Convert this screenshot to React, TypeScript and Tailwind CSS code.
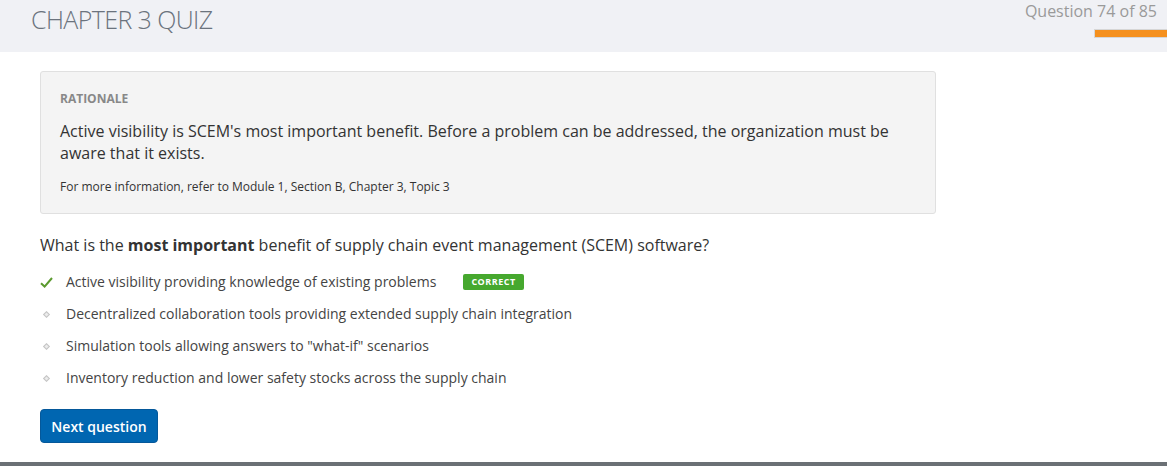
import React from 'react'

const options = [
  { text: 'Active visibility providing knowledge of existing problems', correct: true },
  { text: 'Decentralized collaboration tools providing extended supply chain integration', correct: false },
  { text: 'Simulation tools allowing answers to "what-if" scenarios', correct: false },
  { text: 'Inventory reduction and lower safety stocks across the supply chain', correct: false },
]

function CheckMark() {
  return (
    <svg width="13" height="11" viewBox="0 0 13 11" className="shrink-0">
      <path d="M1 6.2 L4.6 9.6 L12 1" fill="none" stroke="#5b9a2f" strokeWidth="2" strokeLinejoin="miter" />
    </svg>
  )
}

function Bullet() {
  return (
    <span className="flex w-[13px] shrink-0 justify-center">
      <span className="block h-[5px] w-[5px] rotate-45 border border-[#c4c4c4] bg-[#ececec]" />
    </span>
  )
}

export default function App() {
  return (
    <div className="flex h-[466px] w-full flex-col bg-white font-['Open_Sans',sans-serif] text-[#333]">
      <header className="flex h-[52px] shrink-0 items-start justify-between bg-[#f0f1f5]">
        <h1 className="ml-[31px] mt-[3px] text-[25px] font-light leading-[32px] tracking-[-0.6px] text-[#6b737d]">
          CHAPTER 3 QUIZ
        </h1>
        <div className="flex flex-col items-end">
          <span className="mr-[10px] mt-0 text-[16px] leading-[22px] text-[#9a9a9a]">Question 74 of 85</span>
          <span className="mt-[7px] block h-[9px] w-[73px] border border-[#d6d6d6] border-r-0 bg-[#f5901e]" />
        </div>
      </header>

      <main className="flex-1 px-[40px] pt-[19px]">
        <section className="w-[896px] rounded-[3px] border border-[#e0e0e0] bg-[#f4f4f4] px-[19px] pb-[18px] pt-[17px]">
          <h2 className="text-[12px] font-bold leading-[20px] text-[#888]">RATIONALE</h2>
          <p className="mt-[11px] text-[16px] leading-[22px] text-[#333]">
            Active visibility is SCEM&apos;s most important benefit. Before a problem can be addressed, the organization must be
            aware that it exists.
          </p>
          <p className="mt-[14px] text-[12px] leading-[17px] text-[#333]">
            For more information, refer to Module 1, Section B, Chapter 3, Topic 3
          </p>
        </section>

        <p className="mt-[20px] text-[16px] leading-[22px] text-[#333]">
          What is the <strong className="font-bold">most important</strong> benefit of supply chain event management (SCEM) software?
        </p>

        <ul className="mt-[16px] flex flex-col gap-[12px]">
          {options.map((o) => (
            <li key={o.text} className="flex h-[20px] items-center gap-[13px] text-[14px] leading-[20px] text-[#444]">
              {o.correct ? <CheckMark /> : <Bullet />}
              <span>{o.text}</span>
              {o.correct && (
                <span className="ml-[14px] flex h-[16px] items-center rounded-[2px] bg-[#46a82e] px-[8px] text-[9px] font-bold tracking-[0.5px] text-white">
                  CORRECT
                </span>
              )}
            </li>
          ))}
        </ul>

        <button
          type="button"
          className="mt-[21px] h-[34px] w-[118px] rounded-[4px] border border-[#05589a] bg-[#0066b1] text-[14px] font-semibold text-white"
        >
          Next question
        </button>
      </main>

      <div className="h-[4px] shrink-0 bg-[#6b7075]" />
    </div>
  )
}
